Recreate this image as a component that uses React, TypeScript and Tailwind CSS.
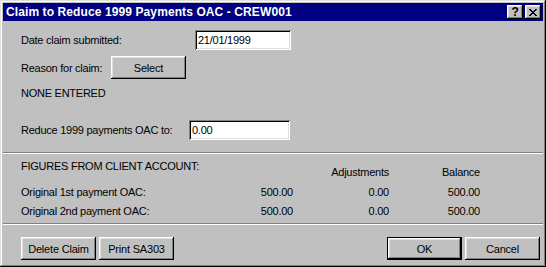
import React from "react";

const raised =
  "shadow-[inset_-1px_-1px_#000,inset_1px_1px_#fff,inset_-2px_-2px_#808080,inset_2px_2px_#dfdfdf]";
const sunken =
  "shadow-[inset_1px_1px_#808080,inset_-1px_-1px_#fff,inset_2px_2px_#000,inset_-2px_-2px_#dfdfdf]";

function PushButton({ label, isDefault = false }: { label: string; isDefault?: boolean }) {
  return (
    <button
      type="button"
      className={`flex h-[23px] w-[75px] items-center justify-center bg-[#c0c0c0] text-[11px] tracking-[-0.2px] text-black ${
        isDefault
          ? "shadow-[inset_0_0_0_1px_#000,inset_-2px_-2px_#000,inset_2px_2px_#fff,inset_-3px_-3px_#808080,inset_3px_3px_#dfdfdf]"
          : raised
      }`}
    >
      {label}
    </button>
  );
}

function TextBox({ value, width }: { value: string; width: string }) {
  return (
    <div className={`flex h-[20px] items-center bg-white pl-[3px] text-[11px] text-black ${width} ${sunken}`}>
      {value}
    </div>
  );
}

function Separator() {
  return (
    <div className="flex flex-col">
      <div className="h-px bg-[#808080]" />
      <div className="h-px bg-white" />
    </div>
  );
}

const figures = [
  { label: "Original 1st payment OAC:", amount: "500.00", adjustment: "0.00", balance: "500.00" },
  { label: "Original 2nd payment OAC:", amount: "500.00", adjustment: "0.00", balance: "500.00" },
];

export default function App() {
  return (
    <div
      className="flex h-[267px] w-[546px] flex-col bg-[#c0c0c0] p-[3px] leading-[14px] tracking-[-0.25px] text-black shadow-[inset_-1px_-1px_#000,inset_1px_1px_#dfdfdf,inset_-2px_-2px_#808080,inset_2px_2px_#fff]"
      style={{ fontFamily: '"Liberation Sans", Arial, sans-serif' }}
    >
      {/* title bar */}
      <div className="flex h-[18px] items-center bg-[#000080] pl-[3px] pr-[2px]">
        <span className="flex-1 text-[12px] font-bold tracking-[0.1px] text-white">
          Claim to Reduce 1999 Payments OAC - CREW001
        </span>
        <div className="flex gap-[2px]">
          <div className={`flex h-[14px] w-[16px] items-center justify-center bg-[#c0c0c0] text-[12px] font-bold leading-none ${raised}`}>
            ?
          </div>
          <div className={`flex h-[14px] w-[16px] items-center justify-center bg-[#c0c0c0] ${raised}`}>
            <svg width="8" height="7" viewBox="0 0 8 7" shapeRendering="crispEdges">
              <path
                fill="#000"
                d="M0 0h2v1H0zM6 0h2v1H6zM1 1h2v1H1zM5 1h2v1H5zM2 2h4v1H2zM3 3h2v1H3zM2 4h4v1H2zM1 5h2v1H1zM5 5h2v1H5zM0 6h2v1H0zM6 6h2v1H6z"
              />
            </svg>
          </div>
        </div>
      </div>

      {/* claim fields */}
      <div className="mt-[9px] flex h-[20px] items-center pl-[18px] text-[11px]">
        <span className="w-[174px]">Date claim submitted:</span>
        <TextBox value="21/01/1999" width="w-[96px]" />
      </div>
      <div className="mt-[6px] flex h-[23px] items-center pl-[18px] text-[11px]">
        <span className="w-[90px]">Reason for claim:</span>
        <PushButton label="Select" />
      </div>
      <div className="mt-[7px] pl-[18px] text-[11px]">NONE ENTERED</div>
      <div className="mt-[20px] flex h-[20px] items-center pl-[18px] text-[11px]">
        <span className="w-[168px]">Reduce 1999 payments OAC to:</span>
        <TextBox value="0.00" width="w-[101px]" />
      </div>

      <div className="mt-[12px]">
        <Separator />
      </div>

      {/* figures */}
      <div className="mt-[5px] grid grid-cols-[200px_72px_96px_91px] pl-[18px] text-[11px]">
        <div className="h-[26px]">FIGURES FROM CLIENT ACCOUNT:</div>
        <div />
        <div className="mt-[6px] text-right">Adjustments</div>
        <div className="mt-[6px] text-right">Balance</div>
        {figures.map((row) => (
          <React.Fragment key={row.label}>
            <div className="h-[19px]">{row.label}</div>
            <div className="text-right">{row.amount}</div>
            <div className="text-right">{row.adjustment}</div>
            <div className="text-right">{row.balance}</div>
          </React.Fragment>
        ))}
      </div>

      <Separator />

      {/* actions */}
      <div className="mt-[12px] flex pl-[18px] pr-[3px]">
        <div className="flex gap-[3px]">
          <PushButton label="Delete Claim" />
          <PushButton label="Print SA303" />
        </div>
        <div className="ml-auto flex gap-[3px]">
          <PushButton label="OK" isDefault />
          <PushButton label="Cancel" />
        </div>
      </div>
    </div>
  );
}
